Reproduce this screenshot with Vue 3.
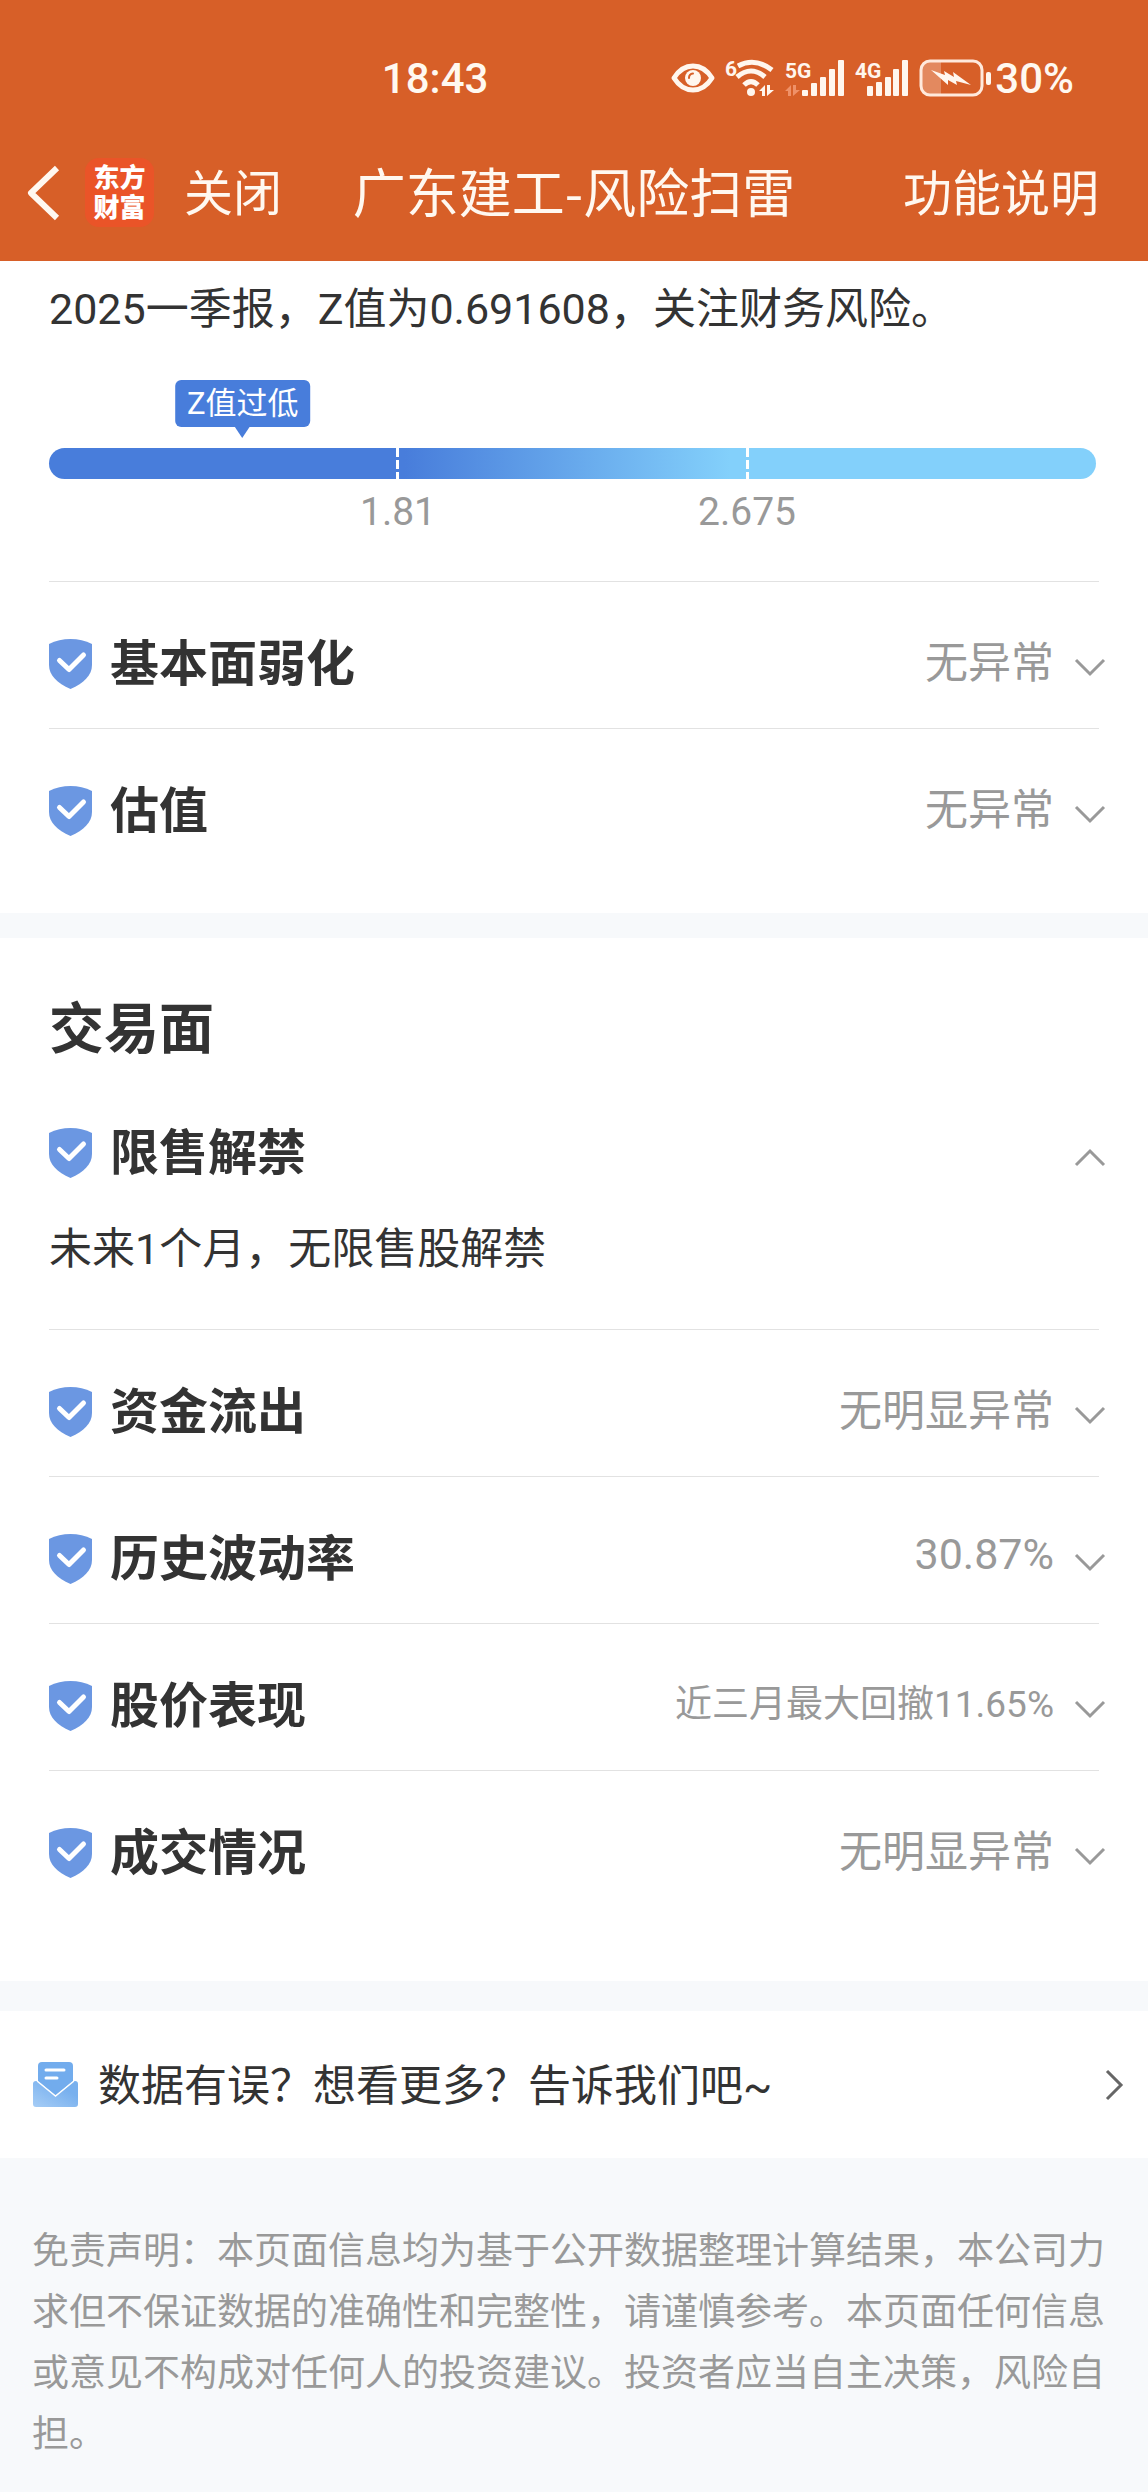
<script setup>
import { ref } from 'vue'

const zScore = {
  label: 'Z值过低',
  percent: 18.5,
  ticks: ['1.81', '2.675'],
}

const sections = ref([
  {
    name: '财务面',
    showName: false,
    items: [
      { name: '基本面弱化', value: '无异常', detail: '', open: false },
      { name: '估值', value: '无异常', detail: '', open: false },
    ],
  },
  {
    name: '交易面',
    showName: true,
    items: [
      { name: '限售解禁', value: '', detail: '未来1个月，无限售股解禁', open: true },
      { name: '资金流出', value: '无明显异常', detail: '', open: false },
      { name: '历史波动率', value: '30.87%', detail: '', open: false },
      { name: '股价表现', value: '近三月最大回撤11.65%', detail: '', open: false, small: true },
      { name: '成交情况', value: '无明显异常', detail: '', open: false },
    ],
  },
])

// 展开 / 收起
function toggle(item) {
  item.open = !item.open
}
</script>

<template>
  <div class="page">
    <header class="header">
      <!-- 状态栏 -->
      <div class="status-bar">
        <span>18:43</span>
        <div class="status-icons">
          <svg width="44" height="32" viewBox="0 0 44 32">
            <path
              d="M3 16C8 8 14.500 4 22 4s14 4 19 12c-5 8-11.500 12-19 12S8 24 3 16z"
              fill="none"
              stroke="#fff6ee"
              stroke-width="5"
              stroke-linejoin="round"
            />
            <circle cx="22" cy="16" r="8" fill="#fff6ee" />
            <path d="M18 16a4.500 4.500 0 0 1 4-4.500" fill="none" stroke="#d75f28" stroke-width="2" stroke-linecap="round" />
          </svg>
          <svg width="50" height="40" viewBox="0 0 50 40">
            <text x="0" y="18" class="net-label">6</text>
            <g fill="none" stroke="#fff6ee" stroke-width="5">
              <path d="M13 8q17-9 34 4" />
              <path d="M12 19q14-12 28 0" />
              <path d="M19 27q7-7 14 0" />
            </g>
            <circle cx="26" cy="34" r="4" fill="#fff6ee" />
            <path d="M34 33l6-6v11h-3v-5zM42 27v11l7-6h-4v-5z" fill="#fff6ee" />
          </svg>
          <svg width="60" height="40" viewBox="0 0 60 40">
            <text x="0" y="20" class="net-label">5G</text>
            <path d="M0 33l6-6v11H3v-5zM8 27v11l7-6h-4v-5z" fill="#ef9168" />
            <g fill="#fff6ee">
              <rect x="17" y="32" width="6" height="6" rx="1" />
              <rect x="26" y="25" width="6" height="13" rx="1" />
              <rect x="35" y="19" width="6" height="19" rx="1" />
              <rect x="44" y="11" width="6" height="27" rx="1" />
              <rect x="53" y="2" width="6" height="36" rx="1" />
            </g>
          </svg>
          <svg width="54" height="40" viewBox="0 0 54 40">
            <text x="0" y="20" class="net-label">4G</text>
            <g fill="#fff6ee">
              <rect x="12" y="28" width="6" height="10" rx="1" />
              <rect x="21" y="24" width="6" height="14" rx="1" />
              <rect x="30" y="19" width="6" height="19" rx="1" />
              <rect x="38" y="11" width="6" height="27" rx="1" />
              <rect x="47" y="2" width="6" height="36" rx="1" />
            </g>
          </svg>
          <div class="battery">
            <svg width="72" height="38" viewBox="0 0 72 38">
              <path d="M10 3h12v32H10q-7 0-7-7V10q0-7 7-7z" fill="#e3895f" />
              <rect x="2" y="2" width="61" height="34" rx="9" fill="none" stroke="#ffe9dc" stroke-width="3" />
              <path d="M12 11l14 5-1-4 10 6-1-5 18 13-15-4 1 4-9-5 0 5z" fill="#fff6ee" />
              <rect x="67" y="13" width="5" height="13" rx="2" fill="#fff6ee" />
            </svg>
            <span>30%</span>
          </div>
        </div>
      </div>

      <!-- 导航栏 -->
      <nav class="nav-bar">
        <div class="nav-left">
          <button aria-label="返回">
            <svg width="34" height="58" viewBox="0 0 34 58">
              <path d="M30 4L4 29l26 25" fill="none" stroke="#fff8f0" stroke-width="6" stroke-linejoin="round" />
            </svg>
          </button>
          <div class="logo"><span>东方</span><span>财富</span></div>
          <button class="nav-btn">关闭</button>
        </div>
        <h1 class="nav-title">广东建工-风险扫雷</h1>
        <div class="nav-right">
          <button class="nav-btn">功能说明</button>
        </div>
      </nav>
    </header>

    <main>
      <section v-for="(section, i) in sections" :key="section.name" class="section">
        <h2 v-if="section.showName" class="section-title">{{ section.name }}</h2>

        <!-- Z值 -->
        <div v-if="i === 0" class="item z-item">
          <p class="detail">2025一季报，Z值为0.691608，关注财务风险。</p>
          <div class="gauge">
            <div class="gauge-tip" :style="{ left: zScore.percent + '%' }">{{ zScore.label }}</div>
            <div class="gauge-bar">
              <i></i>
              <i></i>
            </div>
            <div class="gauge-ticks">
              <span v-for="tick in zScore.ticks" :key="tick">{{ tick }}</span>
            </div>
          </div>
        </div>

        <div v-for="item in section.items" :key="item.name" class="item">
          <button class="item-head" :aria-expanded="item.open" @click="toggle(item)">
            <svg class="shield" width="43" height="50" viewBox="0 0 43 50">
              <path
                d="M0 5Q10 0 21.500 0T43 5v21c0 10-8 18-21.500 24C8 44 0 36 0 26z"
                fill="#6b97e2"
              />
              <path
                d="M10.500 21.500L20 30.500l14.500-14.500"
                fill="none"
                stroke="#fff"
                stroke-width="5"
                stroke-linecap="round"
                stroke-linejoin="round"
              />
            </svg>
            <span class="item-name">{{ item.name }}</span>
            <span class="item-value" :class="{ small: item.small }">{{ item.value }}</span>
            <svg class="arrow" :class="{ up: item.open }" width="30" height="18" viewBox="0 0 30 18">
              <path d="M1 1l14 14L29 1" fill="none" stroke="#999" stroke-width="3" />
            </svg>
          </button>
          <p v-if="item.open && item.detail" class="detail">{{ item.detail }}</p>
        </div>
      </section>
    </main>

    <!-- 反馈入口 -->
    <a class="feedback" href="#">
      <svg width="45" height="45" viewBox="0 0 45 45">
        <defs>
          <linearGradient id="mail" x1="0" y1="1" x2="0.700" y2="0.300">
            <stop offset="0" stop-color="#a6cdf6" />
            <stop offset="1" stop-color="#78b0ee" />
          </linearGradient>
        </defs>
        <path d="M5 4q0-4 4-4h27q4 0 4 4v15L22.500 34 5 19z" fill="#72aced" />
        <path d="M0 22q0-3 3-3h2l17.500 15L40 19h2q3 0 3 3v20q0 3-3 3H3q-3 0-3-3z" fill="url(#mail)" />
        <path d="M4 19l18.500 15L41 19" fill="none" stroke="#fff" stroke-width="1.500" />
        <path d="M13 8h18M13 16h11" stroke="#fff" stroke-width="3" stroke-linecap="round" />
      </svg>
      <span class="feedback-text">数据有误？想看更多？告诉我们吧~</span>
      <svg width="18" height="30" viewBox="0 0 18 30">
        <path d="M2 1l14 14L2 29" fill="none" stroke="#666" stroke-width="3" />
      </svg>
    </a>

    <footer class="disclaimer">
      免责声明：本页面信息均为基于公开数据整理计算结果，本公司力求但不保证数据的准确性和完整性，请谨慎参考。本页面任何信息或意见不构成对任何人的投资建议。投资者应当自主决策，风险自担。
    </footer>
  </div>
</template>

<style>
body {
  margin: 0;
  background: #f7f9fb;
}
</style>

<style scoped>
.page {
  font-family: Roboto, 'Noto Sans CJK SC', sans-serif;
  font-size: 43px;
  color: #333;
  background: #f7f9fb;
}

button {
  padding: 0;
  border: none;
  background: none;
  font: inherit;
  color: inherit;
  cursor: pointer;
}

svg {
  display: block;
  flex-shrink: 0;
  overflow: visible;
}

/* 头部 */
.header {
  background: #d75f28;
  color: #fff8f0;
}

.status-bar {
  box-sizing: border-box;
  height: 124px;
  padding: 32px 74px 0 33%;
  display: flex;
  align-items: center;
  justify-content: space-between;
  font-size: 42px;
  font-weight: 500;
}

.status-bar > span {
  margin-left: 3px;
}

.status-icons {
  display: flex;
  align-items: center;
  gap: 10px;
}

.battery {
  display: flex;
  align-items: center;
  gap: 4px;
}

.net-label {
  font-size: 21px;
  font-weight: 700;
  fill: #fff6ee;
}

.nav-bar {
  height: 137px;
  display: grid;
  grid-template-columns: 1fr auto 1fr;
  align-items: center;
  font-size: 49px;
}

.nav-left {
  display: flex;
  align-items: center;
  padding-left: 27px;
}

.nav-btn,
.nav-title {
  padding-bottom: 6px;
}

.logo {
  box-sizing: border-box;
  width: 69px;
  height: 69px;
  margin: 0 30px 0 24px;
  border-radius: 14px;
  background: #ea5428;
  display: flex;
  flex-direction: column;
  align-items: center;
  justify-content: center;
  font-size: 26px;
  font-weight: 900;
  line-height: 30px;
  color: #fff;
}

.nav-title {
  margin: 0;
  font-family: 'Noto Sans CJK SC', sans-serif;
  font-size: 53px;
  font-weight: 400;
}

.nav-right {
  text-align: right;
  padding-right: 49px;
}

/* 内容区块 */
.section {
  padding: 0 49px 38px;
  background: #fff;
}

.section + .section {
  margin-top: 25px;
  padding: 59px 49px 64px;
}

.section-title {
  margin: 0 0 10px;
  font-size: 55px;
  line-height: 64px;
  font-weight: 700;
}

.item {
  border-bottom: 1px solid #e2e2e2;
}

.item:last-child {
  border-bottom: none;
}

.z-item {
  padding-top: 17px;
}

.item-head {
  box-sizing: border-box;
  width: 100%;
  height: 146px;
  padding-top: 8px;
  display: flex;
  align-items: center;
}

.shield {
  margin: 10px 18px 0 0;
}

.item-name {
  font-size: 49px;
  font-weight: 700;
}

.item-value {
  margin-left: auto;
  color: #999;
}

.item-value.small {
  font-size: 37px;
}

.arrow {
  margin: 18px -6px 0 21px;
}

.arrow.up {
  transform: rotate(180deg);
}

.detail {
  margin: 0;
  line-height: 62px;
}

.item-head + .detail {
  padding: 1px 0 49px;
}

/* Z值刻度条 */
.gauge {
  position: relative;
  margin: 40px 3px 0 0;
  padding: 68px 0 45px;
}

.gauge-tip {
  position: absolute;
  top: 0;
  transform: translateX(-50%);
  padding: 0 12px;
  border-radius: 6px;
  background: #487ddb;
  color: #fff;
  font-size: 31px;
  line-height: 47px;
  white-space: nowrap;
}

.gauge-tip::after {
  content: '';
  position: absolute;
  top: 46px;
  left: 50%;
  margin-left: -8px;
  border: 8px solid transparent;
  border-top: 12px solid #487ddb;
  border-bottom: none;
}

.gauge-bar {
  height: 31px;
  border-radius: 16px;
  background: linear-gradient(90deg, #487ddb 34%, #83d0fb 65%);
  display: flex;
  justify-content: space-evenly;
}

.gauge-bar i {
  width: 3px;
  background: repeating-linear-gradient(#fff 0 9px, transparent 9px 12px);
}

.gauge-ticks {
  display: grid;
  grid-template-columns: 1fr 1fr;
  padding: 9px 16.667% 0;
  text-align: center;
  color: #999;
  font-size: 39px;
  line-height: 48px;
}

/* 反馈 */
.feedback {
  height: 147px;
  margin-top: 30px;
  padding: 0 25px 0 33px;
  background: #fff;
  display: flex;
  align-items: center;
  color: inherit;
  text-decoration: none;
}

.feedback-text {
  flex: 1;
  margin-left: 20px;
  padding-bottom: 6px;
}

.disclaimer {
  padding: 63px 32px 30px;
  color: #999;
  font-size: 37px;
  line-height: 61px;
}
</style>
